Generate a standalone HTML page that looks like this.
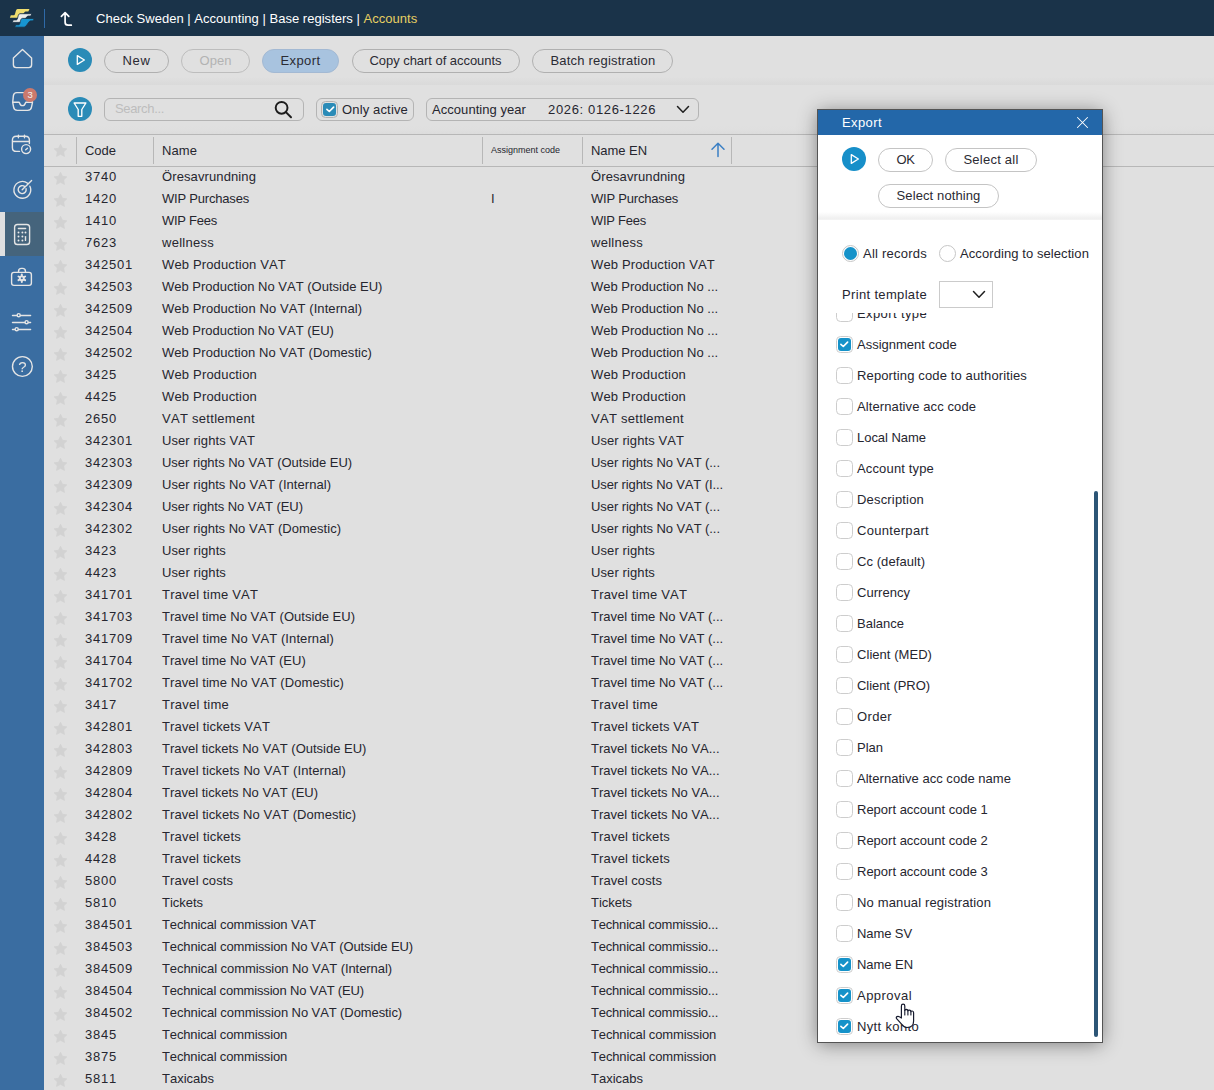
<!DOCTYPE html>
<html><head><meta charset="utf-8"><title>Accounts</title>
<style>
*{box-sizing:border-box;margin:0;padding:0}
html,body{width:1214px;height:1090px;overflow:hidden;background:#e0e0e0}
body{font-family:"Liberation Sans",sans-serif;font-kerning:none;font-size:13px;color:#26262f;position:relative}
.abs{position:absolute}
#top{position:absolute;left:0;top:0;width:1214px;height:36px;background:#1a3349}
#top .title{position:absolute;left:96px;top:1px;line-height:36px;color:#fff;font-size:13px;white-space:nowrap;letter-spacing:.02px}
#top .title b{font-weight:normal;color:#e6cf62}
#top .vsep{position:absolute;left:44px;top:9px;width:1px;height:19px;background:#2f6aa8}
#side{position:absolute;left:0;top:36px;width:44px;height:1054px;background:#3a6da1}
#side .act{position:absolute;left:0;top:176px;width:44px;height:44px;background:#45647c;border-left:5px solid #e0e0e0}
#side svg{position:absolute;overflow:visible}
.ico{fill:none;stroke:#e5e5e5;stroke-width:1.4;stroke-linecap:round;stroke-linejoin:round}
.btn{position:absolute;height:24px;border:1px solid #b0b0b0;border-radius:12px;line-height:22px;text-align:center;font-size:13px;color:#2b2b33;white-space:nowrap}
.circ{position:absolute;width:24px;height:24px;border-radius:12px;background:#2a8bb7}
.circ svg{position:absolute;left:0;top:0}
.band{position:absolute;left:44px;width:1170px;height:8px;top:77px;background:linear-gradient(#e0e0e0,#dedede 30%,#dadada)}
.field{position:absolute;height:23px;border:1px solid #b4b4b4;border-radius:6px;line-height:19px;font-size:13px;white-space:nowrap}
.cb{position:absolute;width:16.4px;height:16.4px;border:1px solid #cdcdcd;border-radius:4.5px;background:#fff}
.cb.on::after{content:"";position:absolute;left:.8px;top:.8px;width:12.8px;height:12.8px;border-radius:3px;background:#1592c9}
.cb.tb{background:transparent;border-color:#b2b2b2}
.cb.tb::after{background:#2a8bb7}
.cb svg{position:absolute;left:1.2px;top:1.2px;z-index:2}
.hline{position:absolute;left:44px;width:1170px;height:1px;background:#b7b7b7}
.vs{position:absolute;top:137px;width:1px;height:27px;background:#b7b7b7}
.th{position:absolute;top:135px;line-height:31px;font-size:13px;white-space:nowrap}
.row{position:absolute;left:44px;width:1170px;height:22px;line-height:22px;white-space:nowrap}
.row span{position:absolute;top:0}
.row .c1{left:41px}
.row .c2{left:118px}
.row .c3{left:447px}
.row .c4{left:547px}
.star{position:absolute;left:9px;top:5px;width:15px;height:15px}
#dlg{position:absolute;left:818px;top:110px;width:284px;height:932px;background:#fff;box-shadow:0 0 0 1px #545454, 0 2px 18px rgba(0,0,0,.45)}
#dlg .tb{position:absolute;left:0;top:0;width:284px;height:25px;background:#2367a9;color:#fff;line-height:26px}
#dlg .tb span{position:absolute;left:24px;top:0}
#dlg .btn{background:#fff;border-color:#c4c4c4}
#dlg .circ{background:#178fc9}
#dlg .grad{position:absolute;left:0;top:102px;width:284px;height:8px;background:linear-gradient(#fff,#f0f0f0 80%,#f4f4f4)}
.radio{position:absolute;width:17px;height:17px;border-radius:9px;border:1px solid #c6c6c6;background:#fff}
.radio.on::after{content:"";position:absolute;left:1.2px;top:1.2px;width:12.6px;height:12.6px;border-radius:7px;background:#1592c9}
.lbl{position:absolute;white-space:nowrap;line-height:16px}
#list{position:absolute;left:0;top:203px;width:284px;height:729px;overflow:hidden}
#sb{position:absolute;left:276px;top:381px;width:4px;height:546px;border-radius:2px;background:#2c5576}
</style></head><body>
<div id="top">
<svg class="abs" style="left:0;top:0" width="44" height="36" viewBox="0 0 44 36">
<path d="M17.6 8.9 L29.5 8.9 L28.3 11.4 L25.6 11.4 C24.0 11.4 21.6 17.7 19.2 17.7 L9.9 17.7 L10.8 15.2 L14.0 15.2 C15.6 15.2 15.2 8.9 17.6 8.9 Z" fill="#f0dd6e" stroke-linejoin="round"/>
<path d="M20.0 13.7 L31.9 13.7 L30.7 16.1 L28.0 16.1 C26.4 16.1 24.0 22.4 21.6 22.4 L12.3 22.4 L13.2 19.9 L16.4 19.9 C18.0 19.9 17.6 13.7 20.0 13.7 Z" fill="#ececec" stroke="#1a3349" stroke-width="0.9" stroke-linejoin="round"/>
<path d="M22.4 18.4 L34.3 18.4 L33.1 20.9 L30.4 20.9 C28.8 20.9 26.4 27.2 24.0 27.2 L14.7 27.2 L15.6 24.7 L18.8 24.7 C20.4 24.7 20.0 18.4 22.4 18.4 Z" fill="#1795d1" stroke="#1a3349" stroke-width="0.9" stroke-linejoin="round"/>
</svg>
<div class="vsep"></div>
<svg class="abs" style="left:57px;top:9px" width="18" height="20" viewBox="0 0 18 20"><path d="M4.4 7.3 L8.1 3.6 L11.8 7.3 M8.1 4 V13.2 Q8.1 16.2 11.1 16.2 H14.3" fill="none" stroke="#fff" stroke-width="1.7" stroke-linecap="round" stroke-linejoin="round"/></svg>
<div class="title">Check Sweden | Accounting | Base registers | <b>Accounts</b></div>
</div>
<div id="side"><div class="act"></div>
<svg style="left:0;top:0" width="44" height="400" viewBox="0 36 44 400">
<path class="ico" d="M13.4 58 L22.5 49.5 L31.6 58 V64.8 Q31.6 67.6 28.8 67.6 H16.2 Q13.4 67.6 13.4 64.8 Z"/>
<path class="ico" d="M16.8 92.6 H28.2 Q31.2 92.6 31.6 95.6 L32.5 102.3 L31.5 107.2 Q30.9 110.4 27.7 110.4 H17.3 Q14.1 110.4 13.6 107.2 L12.7 102.3 L13.4 95.6 Q13.8 92.6 16.8 92.6 Z M12.7 102.3 H18.6 Q19.4 102.3 19.7 103.2 Q20.4 105.6 22.5 105.6 Q24.6 105.6 25.3 103.2 Q25.6 102.3 26.4 102.3 H32.5"/>
<path class="ico" d="M19.5 151.4 H16.4 Q12.4 151.4 12.4 147.4 V140.3 Q12.4 136.3 16.4 136.3 H25.4 Q29.4 136.3 29.4 140.3 V143.6 M12.4 141.5 H29.4 M18.4 135.2 V137.8 M24.5 135.2 V137.8"/>
<circle class="ico" cx="26.1" cy="149.1" r="4.5"/><path class="ico" d="M25.7 149.7 L27.5 148.2" stroke-width="1.3"/>
<path class="ico" d="M29.9 186.2 A8.4 8.4 0 1 1 27.6 183.3"/><path class="ico" d="M26.1 188.8 A4 4 0 1 1 24.8 186.6"/><path class="ico" d="M22.2 189.7 L31.6 180.5"/>
<rect class="ico" x="14.6" y="224.5" width="15" height="20" rx="2.8"/><path class="ico" d="M18.4 228.5 H25.6"/>
<g fill="#ececec"><circle cx="18.5" cy="232.5" r="0.95"/><circle cx="22.4" cy="232.5" r="0.95"/><circle cx="25.5" cy="232.5" r="0.95"/><circle cx="18.5" cy="236.5" r="0.95"/><circle cx="22.4" cy="236.5" r="0.95"/><circle cx="18.5" cy="240.5" r="0.95"/><circle cx="22.4" cy="240.5" r="0.95"/></g><path class="ico" d="M25.5 236.6 V240.4"/>
<path class="ico" d="M11.6 274.7 Q11.6 272.4 13.9 272.4 H29.1 Q31.4 272.4 31.4 274.7 V283.1 Q31.4 285.4 29.1 285.4 H13.9 Q11.6 285.4 11.6 283.1 Z M18.5 272.4 V271.4 Q18.5 268.4 21.5 268.4 H22.5 Q25.5 268.4 25.5 271.4 V272.4"/>
<path d="M21.8 274.5 V282.1 M18.5 276.5 L25.1 280.2 M18.5 280.2 L25.1 276.5" stroke="#e5e5e5" stroke-width="2" fill="none" stroke-linecap="round"/><circle cx="21.8" cy="278.3" r="2.9" fill="#e5e5e5"/><circle cx="21.8" cy="278.3" r="1.05" fill="#3a6da1"/>
<path class="ico" d="M12.5 315.5 H17 M20.4 315.5 H30.6 M12.5 322.5 H24.9 M28.3 322.5 H30.6 M12.5 329.5 H15 M18.4 329.5 H30.6" stroke-width="1.3"/>
<circle class="ico" cx="18.7" cy="315.2" r="1.55" stroke-width="1.2"/><circle class="ico" cx="26.6" cy="322.2" r="1.55" stroke-width="1.2"/><circle class="ico" cx="16.7" cy="329.2" r="1.55" stroke-width="1.2"/>
<circle class="ico" cx="22.4" cy="366.5" r="9.9"/>
</svg>
<div class="abs" style="left:12px;top:320.6px;width:21px;height:20px;line-height:20px;text-align:center;color:#e5e5e5;font-size:15px;will-change:transform">?</div>
<div class="abs" style="left:23.1px;top:51.9px;width:14px;height:14px;border-radius:7px;background:#cb796d;color:#f4f4f4;font-size:9.5px;line-height:14.6px;text-align:center">3</div>
</div>
<div class="circ" style="left:68px;top:48px"><svg width="24" height="24" viewBox="0 0 24 24"><path d="M9.3 7.6 L16.4 12 L9.3 16.4 Z" fill="none" stroke="#fff" stroke-width="1.3" stroke-linejoin="round"/></svg></div>
<div class="btn" style="left:104px;top:49px;width:65px;letter-spacing:0.66px">New</div>
<div class="btn" style="left:181px;top:49px;width:69px;color:#b3b3b3;border-color:#bdbdbd;letter-spacing:0.05px">Open</div>
<div class="btn" style="left:262px;top:49px;width:77px;background:#a8c3df;border-color:#a3b9d3;letter-spacing:0.40px">Export</div>
<div class="btn" style="left:351.5px;top:49px;width:168px;letter-spacing:-0.04px">Copy chart of accounts</div>
<div class="btn" style="left:532.3px;top:49px;width:141.2px;letter-spacing:0.21px">Batch registration</div>
<div class="band"></div><div class="band" style="top:126px;background:linear-gradient(#e0e0e0,#dfdfdf 40%,#dcdcdc)"></div>
<div class="circ" style="left:68px;top:97px"><svg width="24" height="24" viewBox="0 0 24 24"><path d="M6.1 6 H17.9 L13.8 12.5 V19.3 H10.2 V12.5 Z" fill="none" stroke="#fff" stroke-width="1.35" stroke-linejoin="round"/></svg></div>
<div class="field" style="left:104px;top:98px;width:200px;color:#bdbdbd;padding-left:10px;letter-spacing:-0.34px">Search...</div>
<svg class="abs" style="left:273.2px;top:99px" width="22" height="22" viewBox="0 0 22 22"><circle cx="8.6" cy="8.8" r="5.9" fill="none" stroke="#1c1c1c" stroke-width="1.95"/><path d="M12.9 13.1 L18 18.2" stroke="#1c1c1c" stroke-width="2" stroke-linecap="round"/></svg>
<div class="field" style="left:316px;top:98px;width:98px"></div>
<div class="cb on tb" style="left:321.4px;top:101.2px"><svg viewBox="0 0 12 12" width="12" height="12"><path d="M2.9 6.3L5.3 8.5L9.6 4.1" fill="none" stroke="#fff" stroke-width="1.65" stroke-linecap="round" stroke-linejoin="round"/></svg></div>
<div class="lbl" style="left:342px;top:102px;letter-spacing:0.15px">Only active</div>
<div class="field" style="left:426px;top:98px;width:273px"></div>
<div class="lbl" style="left:432px;top:102px;letter-spacing:0.05px">Accounting year</div>
<div class="lbl" style="left:548px;top:102px;letter-spacing:0.65px">2026: 0126-1226</div>
<svg class="abs" style="left:675px;top:103px" width="16" height="12" viewBox="0 0 16 12"><path d="M2.5 3.5 L8 9.3 L13.5 3.5" fill="none" stroke="#1f1f1f" stroke-width="1.5" stroke-linecap="round" stroke-linejoin="round"/></svg>
<div class="hline" style="top:134px"></div><div class="hline" style="top:166px"></div>
<div class="vs" style="left:76px"></div><div class="vs" style="left:153px"></div><div class="vs" style="left:482px"></div><div class="vs" style="left:582px"></div><div class="vs" style="left:731px"></div>
<div class="abs" style="left:44px;top:137.7px;width:30px;height:22px"><svg class="star" viewBox="0 0 24 24"><path d="M12 1.8l3.1 6.6 7.1.9-5.2 5 1.3 7.1L12 18l-6.3 3.4L7 14.3l-5.2-5 7.1-.9z" fill="#d2d2d2" stroke="#d2d2d2" stroke-width="1.2" stroke-linejoin="round"/></svg></div>
<div class="th" style="left:85px;letter-spacing:-0.02px">Code</div><div class="th" style="left:162px;letter-spacing:0.08px">Name</div><div class="th" style="left:491px;font-size:9px">Assignment code</div><div class="th" style="left:591px;letter-spacing:-0.05px">Name EN</div>
<svg class="abs" style="left:709.5px;top:141px" width="16" height="18" viewBox="0 0 16 18"><path d="M8 15.4 V2.5 M2 8.2 L8 2.3 L14 8.2" fill="none" stroke="#3a7fc4" stroke-width="1.5" stroke-linecap="round" stroke-linejoin="round"/></svg>
<div class="row" style="top:166px"><svg class="star" viewBox="0 0 24 24"><path d="M12 1.8l3.1 6.6 7.1.9-5.2 5 1.3 7.1L12 18l-6.3 3.4L7 14.3l-5.2-5 7.1-.9z" fill="#d2d2d2" stroke="#d2d2d2" stroke-width="1.2" stroke-linejoin="round"/></svg><span class="c1" style="letter-spacing:0.77px">3740</span><span class="c2" style="letter-spacing:0.11px">Öresavrundning</span><span class="c3"></span><span class="c4" style="letter-spacing:0.11px">Öresavrundning</span></div>
<div class="row" style="top:188px"><svg class="star" viewBox="0 0 24 24"><path d="M12 1.8l3.1 6.6 7.1.9-5.2 5 1.3 7.1L12 18l-6.3 3.4L7 14.3l-5.2-5 7.1-.9z" fill="#d2d2d2" stroke="#d2d2d2" stroke-width="1.2" stroke-linejoin="round"/></svg><span class="c1" style="letter-spacing:0.77px">1420</span><span class="c2" style="letter-spacing:-0.20px">WIP Purchases</span><span class="c3">I</span><span class="c4" style="letter-spacing:-0.20px">WIP Purchases</span></div>
<div class="row" style="top:210px"><svg class="star" viewBox="0 0 24 24"><path d="M12 1.8l3.1 6.6 7.1.9-5.2 5 1.3 7.1L12 18l-6.3 3.4L7 14.3l-5.2-5 7.1-.9z" fill="#d2d2d2" stroke="#d2d2d2" stroke-width="1.2" stroke-linejoin="round"/></svg><span class="c1" style="letter-spacing:0.77px">1410</span><span class="c2" style="letter-spacing:-0.26px">WIP Fees</span><span class="c3"></span><span class="c4" style="letter-spacing:-0.26px">WIP Fees</span></div>
<div class="row" style="top:232px"><svg class="star" viewBox="0 0 24 24"><path d="M12 1.8l3.1 6.6 7.1.9-5.2 5 1.3 7.1L12 18l-6.3 3.4L7 14.3l-5.2-5 7.1-.9z" fill="#d2d2d2" stroke="#d2d2d2" stroke-width="1.2" stroke-linejoin="round"/></svg><span class="c1" style="letter-spacing:0.77px">7623</span><span class="c2" style="letter-spacing:0.27px">wellness</span><span class="c3"></span><span class="c4" style="letter-spacing:0.27px">wellness</span></div>
<div class="row" style="top:254px"><svg class="star" viewBox="0 0 24 24"><path d="M12 1.8l3.1 6.6 7.1.9-5.2 5 1.3 7.1L12 18l-6.3 3.4L7 14.3l-5.2-5 7.1-.9z" fill="#d2d2d2" stroke="#d2d2d2" stroke-width="1.2" stroke-linejoin="round"/></svg><span class="c1" style="letter-spacing:0.77px">342501</span><span class="c2" style="letter-spacing:0.14px">Web Production VAT</span><span class="c3"></span><span class="c4" style="letter-spacing:0.14px">Web Production VAT</span></div>
<div class="row" style="top:276px"><svg class="star" viewBox="0 0 24 24"><path d="M12 1.8l3.1 6.6 7.1.9-5.2 5 1.3 7.1L12 18l-6.3 3.4L7 14.3l-5.2-5 7.1-.9z" fill="#d2d2d2" stroke="#d2d2d2" stroke-width="1.2" stroke-linejoin="round"/></svg><span class="c1" style="letter-spacing:0.77px">342503</span><span class="c2">Web Production No VAT (Outside EU)</span><span class="c3"></span><span class="c4">Web Production No ...</span></div>
<div class="row" style="top:298px"><svg class="star" viewBox="0 0 24 24"><path d="M12 1.8l3.1 6.6 7.1.9-5.2 5 1.3 7.1L12 18l-6.3 3.4L7 14.3l-5.2-5 7.1-.9z" fill="#d2d2d2" stroke="#d2d2d2" stroke-width="1.2" stroke-linejoin="round"/></svg><span class="c1" style="letter-spacing:0.77px">342509</span><span class="c2" style="letter-spacing:0.09px">Web Production No VAT (Internal)</span><span class="c3"></span><span class="c4">Web Production No ...</span></div>
<div class="row" style="top:320px"><svg class="star" viewBox="0 0 24 24"><path d="M12 1.8l3.1 6.6 7.1.9-5.2 5 1.3 7.1L12 18l-6.3 3.4L7 14.3l-5.2-5 7.1-.9z" fill="#d2d2d2" stroke="#d2d2d2" stroke-width="1.2" stroke-linejoin="round"/></svg><span class="c1" style="letter-spacing:0.77px">342504</span><span class="c2">Web Production No VAT (EU)</span><span class="c3"></span><span class="c4">Web Production No ...</span></div>
<div class="row" style="top:342px"><svg class="star" viewBox="0 0 24 24"><path d="M12 1.8l3.1 6.6 7.1.9-5.2 5 1.3 7.1L12 18l-6.3 3.4L7 14.3l-5.2-5 7.1-.9z" fill="#d2d2d2" stroke="#d2d2d2" stroke-width="1.2" stroke-linejoin="round"/></svg><span class="c1" style="letter-spacing:0.77px">342502</span><span class="c2" style="letter-spacing:0.06px">Web Production No VAT (Domestic)</span><span class="c3"></span><span class="c4">Web Production No ...</span></div>
<div class="row" style="top:364px"><svg class="star" viewBox="0 0 24 24"><path d="M12 1.8l3.1 6.6 7.1.9-5.2 5 1.3 7.1L12 18l-6.3 3.4L7 14.3l-5.2-5 7.1-.9z" fill="#d2d2d2" stroke="#d2d2d2" stroke-width="1.2" stroke-linejoin="round"/></svg><span class="c1" style="letter-spacing:0.77px">3425</span><span class="c2" style="letter-spacing:0.18px">Web Production</span><span class="c3"></span><span class="c4" style="letter-spacing:0.18px">Web Production</span></div>
<div class="row" style="top:386px"><svg class="star" viewBox="0 0 24 24"><path d="M12 1.8l3.1 6.6 7.1.9-5.2 5 1.3 7.1L12 18l-6.3 3.4L7 14.3l-5.2-5 7.1-.9z" fill="#d2d2d2" stroke="#d2d2d2" stroke-width="1.2" stroke-linejoin="round"/></svg><span class="c1" style="letter-spacing:0.77px">4425</span><span class="c2" style="letter-spacing:0.18px">Web Production</span><span class="c3"></span><span class="c4" style="letter-spacing:0.18px">Web Production</span></div>
<div class="row" style="top:408px"><svg class="star" viewBox="0 0 24 24"><path d="M12 1.8l3.1 6.6 7.1.9-5.2 5 1.3 7.1L12 18l-6.3 3.4L7 14.3l-5.2-5 7.1-.9z" fill="#d2d2d2" stroke="#d2d2d2" stroke-width="1.2" stroke-linejoin="round"/></svg><span class="c1" style="letter-spacing:0.77px">2650</span><span class="c2" style="letter-spacing:0.29px">VAT settlement</span><span class="c3"></span><span class="c4" style="letter-spacing:0.29px">VAT settlement</span></div>
<div class="row" style="top:430px"><svg class="star" viewBox="0 0 24 24"><path d="M12 1.8l3.1 6.6 7.1.9-5.2 5 1.3 7.1L12 18l-6.3 3.4L7 14.3l-5.2-5 7.1-.9z" fill="#d2d2d2" stroke="#d2d2d2" stroke-width="1.2" stroke-linejoin="round"/></svg><span class="c1" style="letter-spacing:0.77px">342301</span><span class="c2" style="letter-spacing:0.08px">User rights VAT</span><span class="c3"></span><span class="c4" style="letter-spacing:0.08px">User rights VAT</span></div>
<div class="row" style="top:452px"><svg class="star" viewBox="0 0 24 24"><path d="M12 1.8l3.1 6.6 7.1.9-5.2 5 1.3 7.1L12 18l-6.3 3.4L7 14.3l-5.2-5 7.1-.9z" fill="#d2d2d2" stroke="#d2d2d2" stroke-width="1.2" stroke-linejoin="round"/></svg><span class="c1" style="letter-spacing:0.77px">342303</span><span class="c2" style="letter-spacing:-0.02px">User rights No VAT (Outside EU)</span><span class="c3"></span><span class="c4" style="letter-spacing:-0.08px">User rights No VAT (...</span></div>
<div class="row" style="top:474px"><svg class="star" viewBox="0 0 24 24"><path d="M12 1.8l3.1 6.6 7.1.9-5.2 5 1.3 7.1L12 18l-6.3 3.4L7 14.3l-5.2-5 7.1-.9z" fill="#d2d2d2" stroke="#d2d2d2" stroke-width="1.2" stroke-linejoin="round"/></svg><span class="c1" style="letter-spacing:0.77px">342309</span><span class="c2" style="letter-spacing:0.05px">User rights No VAT (Internal)</span><span class="c3"></span><span class="c4" style="letter-spacing:-0.10px">User rights No VAT (I...</span></div>
<div class="row" style="top:496px"><svg class="star" viewBox="0 0 24 24"><path d="M12 1.8l3.1 6.6 7.1.9-5.2 5 1.3 7.1L12 18l-6.3 3.4L7 14.3l-5.2-5 7.1-.9z" fill="#d2d2d2" stroke="#d2d2d2" stroke-width="1.2" stroke-linejoin="round"/></svg><span class="c1" style="letter-spacing:0.77px">342304</span><span class="c2" style="letter-spacing:-0.06px">User rights No VAT (EU)</span><span class="c3"></span><span class="c4" style="letter-spacing:-0.08px">User rights No VAT (...</span></div>
<div class="row" style="top:518px"><svg class="star" viewBox="0 0 24 24"><path d="M12 1.8l3.1 6.6 7.1.9-5.2 5 1.3 7.1L12 18l-6.3 3.4L7 14.3l-5.2-5 7.1-.9z" fill="#d2d2d2" stroke="#d2d2d2" stroke-width="1.2" stroke-linejoin="round"/></svg><span class="c1" style="letter-spacing:0.77px">342302</span><span class="c2" style="letter-spacing:0.02px">User rights No VAT (Domestic)</span><span class="c3"></span><span class="c4" style="letter-spacing:-0.08px">User rights No VAT (...</span></div>
<div class="row" style="top:540px"><svg class="star" viewBox="0 0 24 24"><path d="M12 1.8l3.1 6.6 7.1.9-5.2 5 1.3 7.1L12 18l-6.3 3.4L7 14.3l-5.2-5 7.1-.9z" fill="#d2d2d2" stroke="#d2d2d2" stroke-width="1.2" stroke-linejoin="round"/></svg><span class="c1" style="letter-spacing:0.77px">3423</span><span class="c2" style="letter-spacing:0.10px">User rights</span><span class="c3"></span><span class="c4" style="letter-spacing:0.10px">User rights</span></div>
<div class="row" style="top:562px"><svg class="star" viewBox="0 0 24 24"><path d="M12 1.8l3.1 6.6 7.1.9-5.2 5 1.3 7.1L12 18l-6.3 3.4L7 14.3l-5.2-5 7.1-.9z" fill="#d2d2d2" stroke="#d2d2d2" stroke-width="1.2" stroke-linejoin="round"/></svg><span class="c1" style="letter-spacing:0.77px">4423</span><span class="c2" style="letter-spacing:0.10px">User rights</span><span class="c3"></span><span class="c4" style="letter-spacing:0.10px">User rights</span></div>
<div class="row" style="top:584px"><svg class="star" viewBox="0 0 24 24"><path d="M12 1.8l3.1 6.6 7.1.9-5.2 5 1.3 7.1L12 18l-6.3 3.4L7 14.3l-5.2-5 7.1-.9z" fill="#d2d2d2" stroke="#d2d2d2" stroke-width="1.2" stroke-linejoin="round"/></svg><span class="c1" style="letter-spacing:0.77px">341701</span><span class="c2" style="letter-spacing:0.19px">Travel time VAT</span><span class="c3"></span><span class="c4" style="letter-spacing:0.19px">Travel time VAT</span></div>
<div class="row" style="top:606px"><svg class="star" viewBox="0 0 24 24"><path d="M12 1.8l3.1 6.6 7.1.9-5.2 5 1.3 7.1L12 18l-6.3 3.4L7 14.3l-5.2-5 7.1-.9z" fill="#d2d2d2" stroke="#d2d2d2" stroke-width="1.2" stroke-linejoin="round"/></svg><span class="c1" style="letter-spacing:0.77px">341703</span><span class="c2" style="letter-spacing:0.03px">Travel time No VAT (Outside EU)</span><span class="c3"></span><span class="c4">Travel time No VAT (...</span></div>
<div class="row" style="top:628px"><svg class="star" viewBox="0 0 24 24"><path d="M12 1.8l3.1 6.6 7.1.9-5.2 5 1.3 7.1L12 18l-6.3 3.4L7 14.3l-5.2-5 7.1-.9z" fill="#d2d2d2" stroke="#d2d2d2" stroke-width="1.2" stroke-linejoin="round"/></svg><span class="c1" style="letter-spacing:0.77px">341709</span><span class="c2" style="letter-spacing:0.10px">Travel time No VAT (Internal)</span><span class="c3"></span><span class="c4">Travel time No VAT (...</span></div>
<div class="row" style="top:650px"><svg class="star" viewBox="0 0 24 24"><path d="M12 1.8l3.1 6.6 7.1.9-5.2 5 1.3 7.1L12 18l-6.3 3.4L7 14.3l-5.2-5 7.1-.9z" fill="#d2d2d2" stroke="#d2d2d2" stroke-width="1.2" stroke-linejoin="round"/></svg><span class="c1" style="letter-spacing:0.77px">341704</span><span class="c2">Travel time No VAT (EU)</span><span class="c3"></span><span class="c4">Travel time No VAT (...</span></div>
<div class="row" style="top:672px"><svg class="star" viewBox="0 0 24 24"><path d="M12 1.8l3.1 6.6 7.1.9-5.2 5 1.3 7.1L12 18l-6.3 3.4L7 14.3l-5.2-5 7.1-.9z" fill="#d2d2d2" stroke="#d2d2d2" stroke-width="1.2" stroke-linejoin="round"/></svg><span class="c1" style="letter-spacing:0.77px">341702</span><span class="c2" style="letter-spacing:0.07px">Travel time No VAT (Domestic)</span><span class="c3"></span><span class="c4">Travel time No VAT (...</span></div>
<div class="row" style="top:694px"><svg class="star" viewBox="0 0 24 24"><path d="M12 1.8l3.1 6.6 7.1.9-5.2 5 1.3 7.1L12 18l-6.3 3.4L7 14.3l-5.2-5 7.1-.9z" fill="#d2d2d2" stroke="#d2d2d2" stroke-width="1.2" stroke-linejoin="round"/></svg><span class="c1" style="letter-spacing:0.77px">3417</span><span class="c2" style="letter-spacing:0.25px">Travel time</span><span class="c3"></span><span class="c4" style="letter-spacing:0.25px">Travel time</span></div>
<div class="row" style="top:716px"><svg class="star" viewBox="0 0 24 24"><path d="M12 1.8l3.1 6.6 7.1.9-5.2 5 1.3 7.1L12 18l-6.3 3.4L7 14.3l-5.2-5 7.1-.9z" fill="#d2d2d2" stroke="#d2d2d2" stroke-width="1.2" stroke-linejoin="round"/></svg><span class="c1" style="letter-spacing:0.77px">342801</span><span class="c2" style="letter-spacing:0.14px">Travel tickets VAT</span><span class="c3"></span><span class="c4" style="letter-spacing:0.14px">Travel tickets VAT</span></div>
<div class="row" style="top:738px"><svg class="star" viewBox="0 0 24 24"><path d="M12 1.8l3.1 6.6 7.1.9-5.2 5 1.3 7.1L12 18l-6.3 3.4L7 14.3l-5.2-5 7.1-.9z" fill="#d2d2d2" stroke="#d2d2d2" stroke-width="1.2" stroke-linejoin="round"/></svg><span class="c1" style="letter-spacing:0.77px">342803</span><span class="c2">Travel tickets No VAT (Outside EU)</span><span class="c3"></span><span class="c4">Travel tickets No VA...</span></div>
<div class="row" style="top:760px"><svg class="star" viewBox="0 0 24 24"><path d="M12 1.8l3.1 6.6 7.1.9-5.2 5 1.3 7.1L12 18l-6.3 3.4L7 14.3l-5.2-5 7.1-.9z" fill="#d2d2d2" stroke="#d2d2d2" stroke-width="1.2" stroke-linejoin="round"/></svg><span class="c1" style="letter-spacing:0.77px">342809</span><span class="c2" style="letter-spacing:0.08px">Travel tickets No VAT (Internal)</span><span class="c3"></span><span class="c4">Travel tickets No VA...</span></div>
<div class="row" style="top:782px"><svg class="star" viewBox="0 0 24 24"><path d="M12 1.8l3.1 6.6 7.1.9-5.2 5 1.3 7.1L12 18l-6.3 3.4L7 14.3l-5.2-5 7.1-.9z" fill="#d2d2d2" stroke="#d2d2d2" stroke-width="1.2" stroke-linejoin="round"/></svg><span class="c1" style="letter-spacing:0.77px">342804</span><span class="c2">Travel tickets No VAT (EU)</span><span class="c3"></span><span class="c4">Travel tickets No VA...</span></div>
<div class="row" style="top:804px"><svg class="star" viewBox="0 0 24 24"><path d="M12 1.8l3.1 6.6 7.1.9-5.2 5 1.3 7.1L12 18l-6.3 3.4L7 14.3l-5.2-5 7.1-.9z" fill="#d2d2d2" stroke="#d2d2d2" stroke-width="1.2" stroke-linejoin="round"/></svg><span class="c1" style="letter-spacing:0.77px">342802</span><span class="c2" style="letter-spacing:0.06px">Travel tickets No VAT (Domestic)</span><span class="c3"></span><span class="c4">Travel tickets No VA...</span></div>
<div class="row" style="top:826px"><svg class="star" viewBox="0 0 24 24"><path d="M12 1.8l3.1 6.6 7.1.9-5.2 5 1.3 7.1L12 18l-6.3 3.4L7 14.3l-5.2-5 7.1-.9z" fill="#d2d2d2" stroke="#d2d2d2" stroke-width="1.2" stroke-linejoin="round"/></svg><span class="c1" style="letter-spacing:0.77px">3428</span><span class="c2" style="letter-spacing:0.17px">Travel tickets</span><span class="c3"></span><span class="c4" style="letter-spacing:0.17px">Travel tickets</span></div>
<div class="row" style="top:848px"><svg class="star" viewBox="0 0 24 24"><path d="M12 1.8l3.1 6.6 7.1.9-5.2 5 1.3 7.1L12 18l-6.3 3.4L7 14.3l-5.2-5 7.1-.9z" fill="#d2d2d2" stroke="#d2d2d2" stroke-width="1.2" stroke-linejoin="round"/></svg><span class="c1" style="letter-spacing:0.77px">4428</span><span class="c2" style="letter-spacing:0.17px">Travel tickets</span><span class="c3"></span><span class="c4" style="letter-spacing:0.17px">Travel tickets</span></div>
<div class="row" style="top:870px"><svg class="star" viewBox="0 0 24 24"><path d="M12 1.8l3.1 6.6 7.1.9-5.2 5 1.3 7.1L12 18l-6.3 3.4L7 14.3l-5.2-5 7.1-.9z" fill="#d2d2d2" stroke="#d2d2d2" stroke-width="1.2" stroke-linejoin="round"/></svg><span class="c1" style="letter-spacing:0.77px">5800</span><span class="c2" style="letter-spacing:0.08px">Travel costs</span><span class="c3"></span><span class="c4" style="letter-spacing:0.08px">Travel costs</span></div>
<div class="row" style="top:892px"><svg class="star" viewBox="0 0 24 24"><path d="M12 1.8l3.1 6.6 7.1.9-5.2 5 1.3 7.1L12 18l-6.3 3.4L7 14.3l-5.2-5 7.1-.9z" fill="#d2d2d2" stroke="#d2d2d2" stroke-width="1.2" stroke-linejoin="round"/></svg><span class="c1" style="letter-spacing:0.77px">5810</span><span class="c2" style="letter-spacing:-0.03px">Tickets</span><span class="c3"></span><span class="c4" style="letter-spacing:-0.03px">Tickets</span></div>
<div class="row" style="top:914px"><svg class="star" viewBox="0 0 24 24"><path d="M12 1.8l3.1 6.6 7.1.9-5.2 5 1.3 7.1L12 18l-6.3 3.4L7 14.3l-5.2-5 7.1-.9z" fill="#d2d2d2" stroke="#d2d2d2" stroke-width="1.2" stroke-linejoin="round"/></svg><span class="c1" style="letter-spacing:0.77px">384501</span><span class="c2" style="letter-spacing:-0.12px">Technical commission VAT</span><span class="c3"></span><span class="c4" style="letter-spacing:-0.20px">Technical commissio...</span></div>
<div class="row" style="top:936px"><svg class="star" viewBox="0 0 24 24"><path d="M12 1.8l3.1 6.6 7.1.9-5.2 5 1.3 7.1L12 18l-6.3 3.4L7 14.3l-5.2-5 7.1-.9z" fill="#d2d2d2" stroke="#d2d2d2" stroke-width="1.2" stroke-linejoin="round"/></svg><span class="c1" style="letter-spacing:0.77px">384503</span><span class="c2" style="letter-spacing:-0.12px">Technical commission No VAT (Outside EU)</span><span class="c3"></span><span class="c4" style="letter-spacing:-0.20px">Technical commissio...</span></div>
<div class="row" style="top:958px"><svg class="star" viewBox="0 0 24 24"><path d="M12 1.8l3.1 6.6 7.1.9-5.2 5 1.3 7.1L12 18l-6.3 3.4L7 14.3l-5.2-5 7.1-.9z" fill="#d2d2d2" stroke="#d2d2d2" stroke-width="1.2" stroke-linejoin="round"/></svg><span class="c1" style="letter-spacing:0.77px">384509</span><span class="c2" style="letter-spacing:-0.07px">Technical commission No VAT (Internal)</span><span class="c3"></span><span class="c4" style="letter-spacing:-0.20px">Technical commissio...</span></div>
<div class="row" style="top:980px"><svg class="star" viewBox="0 0 24 24"><path d="M12 1.8l3.1 6.6 7.1.9-5.2 5 1.3 7.1L12 18l-6.3 3.4L7 14.3l-5.2-5 7.1-.9z" fill="#d2d2d2" stroke="#d2d2d2" stroke-width="1.2" stroke-linejoin="round"/></svg><span class="c1" style="letter-spacing:0.77px">384504</span><span class="c2" style="letter-spacing:-0.17px">Technical commission No VAT (EU)</span><span class="c3"></span><span class="c4" style="letter-spacing:-0.20px">Technical commissio...</span></div>
<div class="row" style="top:1002px"><svg class="star" viewBox="0 0 24 24"><path d="M12 1.8l3.1 6.6 7.1.9-5.2 5 1.3 7.1L12 18l-6.3 3.4L7 14.3l-5.2-5 7.1-.9z" fill="#d2d2d2" stroke="#d2d2d2" stroke-width="1.2" stroke-linejoin="round"/></svg><span class="c1" style="letter-spacing:0.77px">384502</span><span class="c2" style="letter-spacing:-0.09px">Technical commission No VAT (Domestic)</span><span class="c3"></span><span class="c4" style="letter-spacing:-0.20px">Technical commissio...</span></div>
<div class="row" style="top:1024px"><svg class="star" viewBox="0 0 24 24"><path d="M12 1.8l3.1 6.6 7.1.9-5.2 5 1.3 7.1L12 18l-6.3 3.4L7 14.3l-5.2-5 7.1-.9z" fill="#d2d2d2" stroke="#d2d2d2" stroke-width="1.2" stroke-linejoin="round"/></svg><span class="c1" style="letter-spacing:0.77px">3845</span><span class="c2" style="letter-spacing:-0.14px">Technical commission</span><span class="c3"></span><span class="c4" style="letter-spacing:-0.14px">Technical commission</span></div>
<div class="row" style="top:1046px"><svg class="star" viewBox="0 0 24 24"><path d="M12 1.8l3.1 6.6 7.1.9-5.2 5 1.3 7.1L12 18l-6.3 3.4L7 14.3l-5.2-5 7.1-.9z" fill="#d2d2d2" stroke="#d2d2d2" stroke-width="1.2" stroke-linejoin="round"/></svg><span class="c1" style="letter-spacing:0.77px">3875</span><span class="c2" style="letter-spacing:-0.14px">Technical commission</span><span class="c3"></span><span class="c4" style="letter-spacing:-0.14px">Technical commission</span></div>
<div class="row" style="top:1068px"><svg class="star" viewBox="0 0 24 24"><path d="M12 1.8l3.1 6.6 7.1.9-5.2 5 1.3 7.1L12 18l-6.3 3.4L7 14.3l-5.2-5 7.1-.9z" fill="#d2d2d2" stroke="#d2d2d2" stroke-width="1.2" stroke-linejoin="round"/></svg><span class="c1" style="letter-spacing:0.77px">5811</span><span class="c2">Taxicabs</span><span class="c3"></span><span class="c4">Taxicabs</span></div>
<div id="dlg">
<div class="tb"><span style="letter-spacing:.4px">Export</span><svg class="abs" style="left:258px;top:6px" width="13" height="13" viewBox="0 0 13 13"><path d="M1.5 1.5 L11.5 11.5 M11.5 1.5 L1.5 11.5" stroke="#fff" stroke-width="1.05" stroke-linecap="round"/></svg></div>
<div class="grad"></div>
<div class="circ" style="left:24px;top:37px"><svg width="24" height="24" viewBox="0 0 24 24"><path d="M9.3 7.6 L16.4 12 L9.3 16.4 Z" fill="none" stroke="#fff" stroke-width="1.3" stroke-linejoin="round"/></svg></div>
<div class="btn" style="left:60px;top:38px;width:55px;letter-spacing:-0.40px">OK</div>
<div class="btn" style="left:127px;top:38px;width:92px;letter-spacing:0.23px">Select all</div>
<div class="btn" style="left:60px;top:74px;width:121px;letter-spacing:0.11px">Select nothing</div>
<div class="radio on" style="left:24px;top:135px"></div><div class="lbl" style="left:45px;top:136px;letter-spacing:0.23px">All records</div>
<div class="radio" style="left:121px;top:135px"></div><div class="lbl" style="left:142px;top:136px;letter-spacing:0.08px">According to selection</div>
<div class="lbl" style="left:24px;top:177px;letter-spacing:0.34px">Print template</div>
<div class="abs" style="left:121px;top:171px;width:54px;height:27px;border:1px solid #cbcbcb;background:#fff"></div>
<svg class="abs" style="left:153px;top:178px" width="16" height="12" viewBox="0 0 16 12"><path d="M2.5 3.5 L8 9.3 L13.5 3.5" fill="none" stroke="#1f1f1f" stroke-width="1.5" stroke-linecap="round" stroke-linejoin="round"/></svg>
<div id="list">
<div class="cb" style="left:18.3px;top:-7.7px"></div><div class="lbl" style="left:39px;top:-7px;letter-spacing:0.39px">Export type</div>
<div class="cb on" style="left:18.3px;top:23.3px"><svg viewBox="0 0 12 12" width="12" height="12"><path d="M2.9 6.3L5.3 8.5L9.6 4.1" fill="none" stroke="#fff" stroke-width="1.65" stroke-linecap="round" stroke-linejoin="round"/></svg></div><div class="lbl" style="left:39px;top:24px">Assignment code</div>
<div class="cb" style="left:18.3px;top:54.3px"></div><div class="lbl" style="left:39px;top:55px;letter-spacing:0.13px">Reporting code to authorities</div>
<div class="cb" style="left:18.3px;top:85.3px"></div><div class="lbl" style="left:39px;top:86px;letter-spacing:0.10px">Alternative acc code</div>
<div class="cb" style="left:18.3px;top:116.3px"></div><div class="lbl" style="left:39px;top:117px;letter-spacing:-0.04px">Local Name</div>
<div class="cb" style="left:18.3px;top:147.3px"></div><div class="lbl" style="left:39px;top:148px;letter-spacing:0.15px">Account type</div>
<div class="cb" style="left:18.3px;top:178.3px"></div><div class="lbl" style="left:39px;top:179px;letter-spacing:0.18px">Description</div>
<div class="cb" style="left:18.3px;top:209.3px"></div><div class="lbl" style="left:39px;top:210px;letter-spacing:0.30px">Counterpart</div>
<div class="cb" style="left:18.3px;top:240.3px"></div><div class="lbl" style="left:39px;top:241px;letter-spacing:0.07px">Cc (default)</div>
<div class="cb" style="left:18.3px;top:271.3px"></div><div class="lbl" style="left:39px;top:272px;letter-spacing:0.03px">Currency</div>
<div class="cb" style="left:18.3px;top:302.3px"></div><div class="lbl" style="left:39px;top:303px">Balance</div>
<div class="cb" style="left:18.3px;top:333.3px"></div><div class="lbl" style="left:39px;top:334px;letter-spacing:0.05px">Client (MED)</div>
<div class="cb" style="left:18.3px;top:364.3px"></div><div class="lbl" style="left:39px;top:365px;letter-spacing:-0.06px">Client (PRO)</div>
<div class="cb" style="left:18.3px;top:395.3px"></div><div class="lbl" style="left:39px;top:396px;letter-spacing:0.35px">Order</div>
<div class="cb" style="left:18.3px;top:426.3px"></div><div class="lbl" style="left:39px;top:427px">Plan</div>
<div class="cb" style="left:18.3px;top:457.3px"></div><div class="lbl" style="left:39px;top:458px;letter-spacing:0.03px">Alternative acc code name</div>
<div class="cb" style="left:18.3px;top:488.3px"></div><div class="lbl" style="left:39px;top:489px">Report account code 1</div>
<div class="cb" style="left:18.3px;top:519.3px"></div><div class="lbl" style="left:39px;top:520px">Report account code 2</div>
<div class="cb" style="left:18.3px;top:550.3px"></div><div class="lbl" style="left:39px;top:551px">Report account code 3</div>
<div class="cb" style="left:18.3px;top:581.3px"></div><div class="lbl" style="left:39px;top:582px;letter-spacing:0.15px">No manual registration</div>
<div class="cb" style="left:18.3px;top:612.3px"></div><div class="lbl" style="left:39px;top:613px;letter-spacing:-0.09px">Name SV</div>
<div class="cb on" style="left:18.3px;top:643.3px"><svg viewBox="0 0 12 12" width="12" height="12"><path d="M2.9 6.3L5.3 8.5L9.6 4.1" fill="none" stroke="#fff" stroke-width="1.65" stroke-linecap="round" stroke-linejoin="round"/></svg></div><div class="lbl" style="left:39px;top:644px;letter-spacing:-0.05px;letter-spacing:-0.05px">Name EN</div>
<div class="cb on" style="left:18.3px;top:674.3px"><svg viewBox="0 0 12 12" width="12" height="12"><path d="M2.9 6.3L5.3 8.5L9.6 4.1" fill="none" stroke="#fff" stroke-width="1.65" stroke-linecap="round" stroke-linejoin="round"/></svg></div><div class="lbl" style="left:39px;top:675px;letter-spacing:0.46px">Approval</div>
<div class="cb on" style="left:18.3px;top:705.3px"><svg viewBox="0 0 12 12" width="12" height="12"><path d="M2.9 6.3L5.3 8.5L9.6 4.1" fill="none" stroke="#fff" stroke-width="1.65" stroke-linecap="round" stroke-linejoin="round"/></svg></div><div class="lbl" style="left:39px;top:706px;letter-spacing:0.35px">Nytt konto</div>
</div><div id="sb"></div>
</div>
<svg class="abs" style="left:890px;top:1000px" width="30" height="32" viewBox="890 1000 30 32"><path d="M901.4 1018 V1005.9 Q901.4 1004.2 903.1 1004.2 Q904.8 1004.2 904.8 1005.9 V1010.4 Q904.9 1009.3 906.3 1009.3 Q907.9 1009.4 907.9 1010.9 Q908 1010 909.4 1010.1 Q910.9 1010.2 910.9 1011.7 Q911 1010.9 912.2 1011 Q913.6 1011.1 913.6 1012.8 V1021 Q913.6 1027.5 907 1027.5 Q904 1027.5 901.8 1024.4 L896.6 1018.6 Q895.8 1017.4 897 1016.6 Q898.2 1016 899.4 1016.8 Z" fill="#fff" stroke="#161a2e" stroke-width="1.2" stroke-linejoin="round"/><path d="M904.8 1010.4 V1015 M907.9 1010.9 V1015 M910.9 1011.7 V1015" stroke="#161a2e" stroke-width="1.1" fill="none" stroke-linecap="round"/></svg>
</body></html>
